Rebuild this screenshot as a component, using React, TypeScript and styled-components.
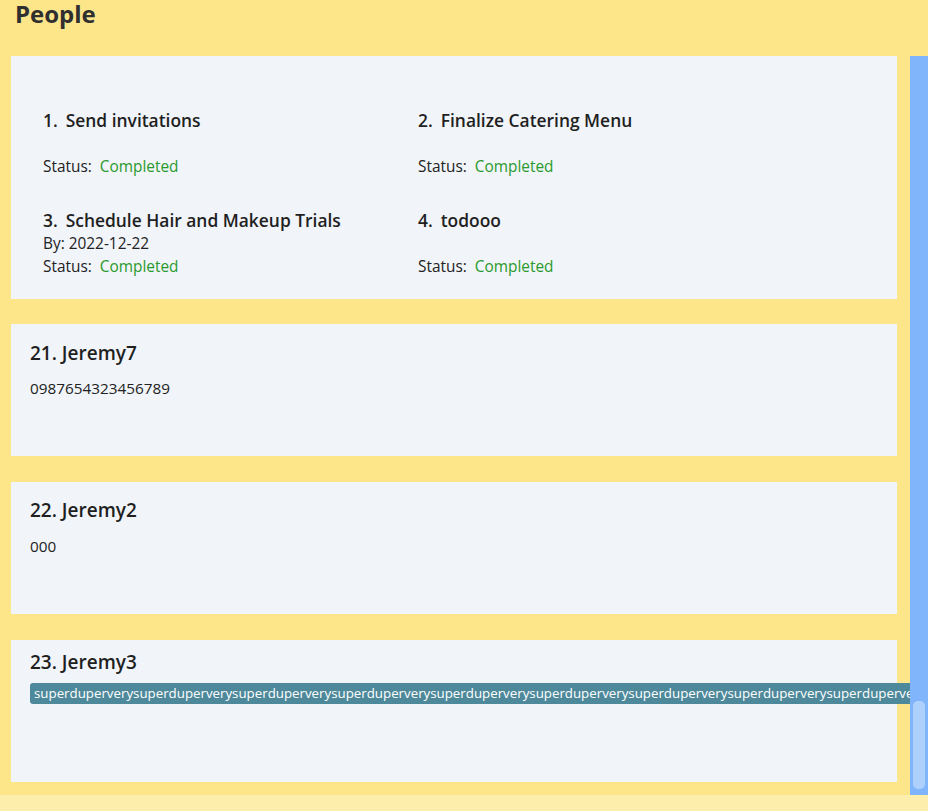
import React from "react";
import styled, { createGlobalStyle } from "styled-components";

const GlobalStyle = createGlobalStyle`
  html, body {
    margin: 0;
    padding: 0;
    background: #fde58a;
    font-family: "Open Sans", "Noto Sans", "Liberation Sans", sans-serif;
  }
  * { box-sizing: border-box; }
`;

const Page = styled.div`
  width: 928px;
  height: 811px;
  display: flex;
  flex-direction: column;
  background: #fde58a;
  overflow: hidden;
`;

const Header = styled.h1`
  margin: 0;
  height: 56px;
  padding-left: 15px;
  font-size: 24px;
  line-height: 28px;
  font-weight: 700;
  color: #2f2f2f;
  flex: none;
`;

const Body = styled.div`
  height: 739px;
  display: flex;
  flex: none;
`;

const ListArea = styled.div`
  width: 910px;
  overflow: hidden;
  display: flex;
  flex-direction: column;
  padding: 0 13px 0 11px;
`;

const ScrollTrack = styled.div`
  width: 18px;
  background: #80b5fb;
  display: flex;
  flex-direction: column;
  padding: 0 3px 6px 3px;
`;

const ScrollThumb = styled.div`
  margin-top: auto;
  height: 88px;
  border-radius: 5px;
  background: #aed0fc;
`;

const Footer = styled.div`
  flex: 1;
  background: #feeeab;
`;

const Card = styled.div<{ $mt: number; $h: number; $pt: number }>`
  flex: none;
  margin-top: ${(p) => p.$mt}px;
  height: ${(p) => p.$h}px;
  padding: ${(p) => p.$pt}px 19px 0 19px;
  background: #f1f4f9;
`;

const TodoCard = styled.div`
  flex: none;
  height: 243px;
  padding: 52px 32px 0 32px;
  background: #f1f4f9;
  display: grid;
  grid-template-columns: 375px 375px;
  row-gap: 30px;
  align-content: start;
`;

const TodoItem = styled.div`
  display: flex;
  flex-direction: column;
`;

const TodoTitle = styled.div`
  font-size: 17.4px;
  line-height: 24px;
  font-weight: 600;
  color: #1f1f1f;
  display: flex;
  gap: 8px;
  white-space: nowrap;
`;

const Line = styled.div`
  font-size: 15.4px;
  line-height: 23px;
  height: 23px;
  color: #222;
  white-space: nowrap;
`;

const StatusValue = styled.span`
  color: #2a9a2e;
  margin-left: 8px;
`;

const PersonName = styled.div`
  font-size: 19px;
  line-height: 25px;
  font-weight: 600;
  color: #1f1f1f;
  white-space: nowrap;
`;

const Phone = styled.div<{ $mt: number }>`
  margin-top: ${(p) => p.$mt}px;
  font-size: 15.3px;
  line-height: 20px;
  color: #222;
`;

const Tag = styled.div`
  margin-top: 8px;
  display: inline-block;
  height: 21px;
  line-height: 21px;
  padding: 0 4px;
  border-radius: 3px;
  background: #4e899b;
  color: #ffffff;
  font-size: 13.3px;
  white-space: nowrap;
`;

const todos = [
  { n: 1, title: "Send invitations", by: "" },
  { n: 2, title: "Finalize Catering Menu", by: "" },
  { n: 3, title: "Schedule Hair and Makeup Trials", by: "By: 2022-12-22" },
  { n: 4, title: "todooo", by: "" },
];

export default function App() {
  const longTag = "superduper" + "verysuperduper".repeat(15);
  return (
    <>
      <GlobalStyle />
      <Page>
        <Header>People</Header>
        <Body>
          <ListArea>
            <TodoCard>
              {todos.map((t) => (
                <TodoItem key={t.n}>
                  <TodoTitle>
                    <span>{t.n}.</span>
                    <span>{t.title}</span>
                  </TodoTitle>
                  <Line>{t.by}</Line>
                  <Line>
                    Status:<StatusValue>Completed</StatusValue>
                  </Line>
                </TodoItem>
              ))}
            </TodoCard>
            <Card $mt={25} $h={132} $pt={17}>
              <PersonName>21. Jeremy7</PersonName>
              <Phone $mt={12}>0987654323456789</Phone>
            </Card>
            <Card $mt={26} $h={132} $pt={16}>
              <PersonName>22. Jeremy2</PersonName>
              <Phone $mt={13}>000</Phone>
            </Card>
            <Card $mt={26} $h={142} $pt={10}>
              <PersonName>23. Jeremy3</PersonName>
              <Tag>{longTag}</Tag>
            </Card>
          </ListArea>
          <ScrollTrack>
            <ScrollThumb />
          </ScrollTrack>
        </Body>
        <Footer />
      </Page>
    </>
  );
}
